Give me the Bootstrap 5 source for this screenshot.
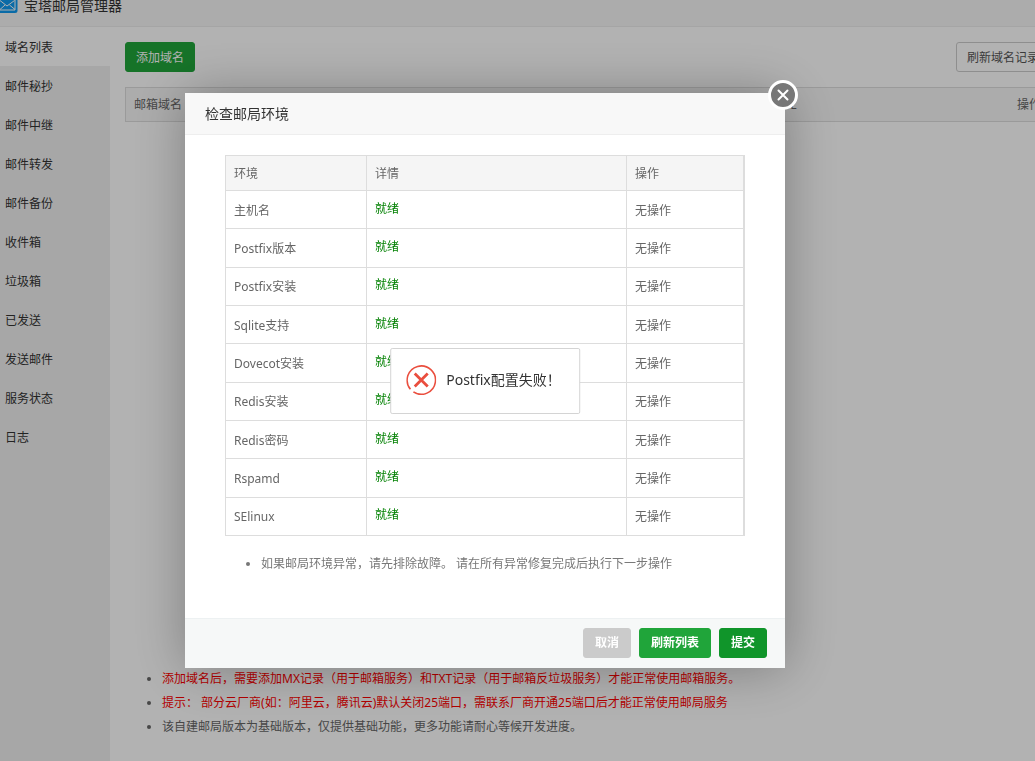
<!DOCTYPE html>
<html lang="zh-CN">
<head>
<meta charset="utf-8">
<meta name="viewport" content="width=device-width, initial-scale=1">
<title>宝塔邮局管理器</title>
<link href="https://cdn.jsdelivr.net/npm/bootstrap@5.3.0/dist/css/bootstrap.min.css" rel="stylesheet">
<style>
  body { font: 12px/24px "Noto Sans", "Noto Sans CJK SC", sans-serif; color: #666; overflow: hidden; }
  .app-bar { height: 27px; background: #f6f6f6; border-bottom: 1px solid #ececec; font-size: 14px; line-height: 12px; color: #333; gap: 6px; overflow: hidden; }
  .side { width: 110px; background: #f0f0f0; }
  .side a { line-height: 37px; padding: 2px 5px 0; color: #333; border-radius: 0; }
  .side a.active { background: #fff; }
  .content { padding: 15px 0 22px 15px; margin-right: -15px; }
  .toolbar { margin-bottom: 15px; }
  .btn { --bs-btn-font-size: 12px; --bs-btn-line-height: 18px; --bs-btn-padding-x: 10px; --bs-btn-border-radius: 3px; padding-top: 6px; padding-bottom: 4px; white-space: nowrap; }
  .btn-main { --bs-btn-color: #fff; --bs-btn-bg: #20a53a; --bs-btn-border-color: #20a53a; }
  .btn-submit { --bs-btn-color: #fff; --bs-btn-bg: #10952a; --bs-btn-border-color: #10952a; }
  .btn-cancel { --bs-btn-color: #fff; --bs-btn-bg: #cbcbcb; --bs-btn-border-color: #cbcbcb; }
  .btn-plain { --bs-btn-color: #555; --bs-btn-bg: #fff; --bs-btn-border-color: #ccc; }
  .grid { border: 1px solid #ddd; color: #666; }
  .grid th { background: #f6f6f6; font-weight: 400; padding: 4px 8px; }
  .domains th { line-height: 25px; border-bottom: 1px solid #ddd; }
  .domains .ops { width: 245px; }
  .tips { padding-left: 37px; }
  .tips .warn { color: #f00; }
  .mask { background: rgba(0, 0, 0, .3); padding-right: 65px; }
  .dialog-box { width: 600px; background: #fff; box-shadow: 1px 1px 50px rgba(0, 0, 0, .3); }
  .dialog-box h1 { font-size: 14px; line-height: 41px; padding: 0 20px; color: #333; background: #f8f8f8; border-bottom: 1px solid #eee; }
  .dialog-main { padding: 20px 40px 42px; }
  .checks { height: 381px; border-right-width: 2px; table-layout: fixed; }
  .checks th, .checks td { border: 1px solid #ddd; padding: 6px 8px 4px; }
  .checks th { height: 35px; background: #f5f5f5; }
  .checks td.state { color: #008000; padding: 0 8px 2px; }
  .checks .name-col { width: 141px; }
  .checks .state-col { width: 260px; }
  .notes { padding-left: 36px; margin-top: 16px; color: #777; }
  .dialog-foot { padding: 9px 18px 10px; background: #f6f8f8; border-top: 1px solid #edf1f2; gap: 8px; }
  .dialog-foot .btn { --bs-btn-padding-x: 11px; padding-top: 5px; padding-bottom: 5px; }
  .close-dot { top: -13px; right: -13px; width: 30px; height: 30px; }
  .message { padding: 16px 18px 18px 15px; gap: 10px; line-height: 30px; font-size: 14px; color: #333; background: #fff; border: 1px solid #d4d4d4; border-radius: 2px; white-space: nowrap; }
</style>
</head>
<body>
<div class="vh-100 d-flex flex-column">
  <header class="app-bar d-flex align-items-start">
    <svg class="flex-shrink-0" width="18" height="13" viewBox="0 0 18 13" aria-hidden="true">
      <path d="M0 0H17.500V10.500Q17.500 13 15 13H0Z" fill="#0f9af0"/>
      <path d="M0 10H15V0M0 .5L7 6L14.500 .5M0 9.500L5 5M15 9.500L9.500 5" fill="none" stroke="#fff" stroke-width="1"/>
    </svg>
    <span>宝塔邮局管理器</span>
  </header>
  <div class="d-flex flex-grow-1">
    <nav class="side nav flex-column flex-nowrap flex-shrink-0">
      <a class="nav-link active" href="#">域名列表</a>
      <a class="nav-link" href="#">邮件秘抄</a>
      <a class="nav-link" href="#">邮件中继</a>
      <a class="nav-link" href="#">邮件转发</a>
      <a class="nav-link" href="#">邮件备份</a>
      <a class="nav-link" href="#">收件箱</a>
      <a class="nav-link" href="#">垃圾箱</a>
      <a class="nav-link" href="#">已发送</a>
      <a class="nav-link" href="#">发送邮件</a>
      <a class="nav-link" href="#">服务状态</a>
      <a class="nav-link" href="#">日志</a>
    </nav>
    <main class="content flex-grow-1 d-flex flex-column">
      <div class="toolbar d-flex justify-content-between">
        <button type="button" class="btn btn-main">添加域名</button>
        <button type="button" class="btn btn-plain">刷新域名记录</button>
      </div>
      <table class="grid domains w-100">
        <thead>
          <tr><th>邮箱域名</th><th class="text-end">SSL</th><th class="ops text-end">操作</th></tr>
        </thead>
      </table>
      <ul class="tips mt-auto mb-0">
        <li><span class="warn">添加域名后，需要添加MX记录（用于邮箱服务）和TXT记录（用于邮箱反垃圾服务）才能正常使用邮箱服务。</span></li>
        <li><span class="warn">提示： 部分云厂商(如：阿里云，腾讯云)默认关闭25端口，需联系厂商开通25端口后才能正常使用邮局服务</span></li>
        <li>该自建邮局版本为基础版本，仅提供基础功能，更多功能请耐心等候开发进度。</li>
      </ul>
    </main>
  </div>
</div>

<div class="mask position-fixed top-0 start-0 w-100 h-100 d-flex align-items-center justify-content-center">
  <section class="dialog-box position-relative" role="dialog" aria-labelledby="dialog-title">
    <h1 id="dialog-title" class="m-0 fw-normal">检查邮局环境</h1>
    <button type="button" class="close-dot position-absolute p-0 border-0 bg-transparent d-flex" aria-label="关闭">
      <svg width="30" height="30" viewBox="0 0 30 30">
        <circle cx="15" cy="15" r="13.500" fill="#777" stroke="#fff" stroke-width="3"/>
        <path d="M10.500 10.500L19.500 19.500M19.500 10.500L10.500 19.500" stroke="#fff" stroke-width="2" stroke-linecap="round"/>
      </svg>
    </button>
    <div class="dialog-main">
      <table class="grid checks w-100">
        <colgroup><col class="name-col"><col class="state-col"><col></colgroup>
        <thead><tr><th>环境</th><th>详情</th><th>操作</th></tr></thead>
        <tbody>
          <tr><td>主机名</td><td class="state">就绪</td><td>无操作</td></tr>
          <tr><td>Postfix版本</td><td class="state">就绪</td><td>无操作</td></tr>
          <tr><td>Postfix安装</td><td class="state">就绪</td><td>无操作</td></tr>
          <tr><td>Sqlite支持</td><td class="state">就绪</td><td>无操作</td></tr>
          <tr><td>Dovecot安装</td><td class="state">就绪</td><td>无操作</td></tr>
          <tr><td>Redis安装</td><td class="state">就绪</td><td>无操作</td></tr>
          <tr><td>Redis密码</td><td class="state">就绪</td><td>无操作</td></tr>
          <tr><td>Rspamd</td><td class="state">就绪</td><td>无操作</td></tr>
          <tr><td>SElinux</td><td class="state">就绪</td><td>无操作</td></tr>
        </tbody>
      </table>
      <ul class="notes mb-0">
        <li>如果邮局环境异常，请先排除故障。 请在所有异常修复完成后执行下一步操作</li>
      </ul>
    </div>
    <footer class="dialog-foot d-flex justify-content-end">
      <button type="button" class="btn btn-cancel fw-bold">取消</button>
      <button type="button" class="btn btn-main fw-bold">刷新列表</button>
      <button type="button" class="btn btn-submit fw-bold">提交</button>
    </footer>
    <div class="message d-flex position-absolute top-50 start-50 translate-middle" role="alert">
      <svg width="30" height="30" viewBox="0 0 30 30" fill="none" stroke="#ea4f3f" aria-hidden="true">
        <path d="M4.200 24.200A14.200 14.200 0 1 1 7.200 26.900" stroke-width="1.600"/>
        <path d="M8.500 8.500L21.500 21.500M21.500 8.500L8.500 21.500" stroke-width="2.800"/>
      </svg>
      <span>Postfix配置失败！</span>
    </div>
  </section>
</div>
<script src="https://cdn.jsdelivr.net/npm/bootstrap@5.3.0/dist/js/bootstrap.bundle.min.js"></script>
</body>
</html>
